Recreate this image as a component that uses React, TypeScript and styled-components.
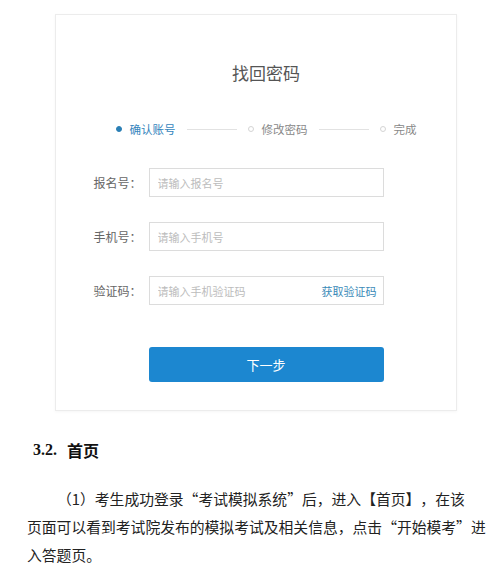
import React from 'react';
import styled, { createGlobalStyle } from 'styled-components';

const GlobalStyle = createGlobalStyle`
  html, body {
    margin: 0;
    padding: 0;
    background: #ffffff;
  }
  body {
    font-family: "Noto Sans CJK SC", "Noto Sans", sans-serif;
    color: #333;
  }
`;

const Page = styled.div`
  width: 499px;
  height: 570px;
  overflow: hidden;
  padding-top: 14px;
  box-sizing: border-box;
`;

const Card = styled.div`
  margin-left: 55px;
  width: 402px;
  box-sizing: border-box;
  border: 1px solid #ececec;
  box-shadow: 0 1px 3px rgba(0, 0, 0, 0.04);
  padding: 46px 0 28px 20px;
  display: flex;
  flex-direction: column;
  align-items: center;
`;

const Title = styled.h2`
  margin: 0;
  font-size: 17px;
  line-height: 24px;
  font-weight: 400;
  color: #555;
`;

const Steps = styled.div`
  margin-top: 36px;
  height: 16px;
  display: flex;
  align-items: center;
`;

const Step = styled.div<{ $active?: boolean }>`
  display: flex;
  align-items: center;
  gap: 8px;
  font-size: 11.5px;
  color: ${p => (p.$active ? '#3585bd' : '#888')};
`;

const Dot = styled.span<{ $active?: boolean }>`
  width: 6px;
  height: 6px;
  border-radius: 50%;
  box-sizing: border-box;
  background: ${p => (p.$active ? '#2a7fb5' : '#fff')};
  border: 1px solid ${p => (p.$active ? '#2a7fb5' : '#d4d4d4')};
`;

const Connector = styled.span`
  width: 50px;
  height: 1px;
  margin: 0 11px;
  background: #e2e2e2;
`;

const Form = styled.div`
  align-self: stretch;
  margin-top: 31px;
  display: grid;
  grid-template-columns: 1fr 235px 1fr;
  row-gap: 25px;
  align-items: center;
`;

const Label = styled.label`
  justify-self: end;
  padding-right: 7px;
  font-size: 12px;
  color: #666;
`;

const Field = styled.div`
  height: 29px;
  box-sizing: border-box;
  border: 1px solid #dcdcdc;
  display: flex;
  align-items: center;
  padding: 0 6px 0 8px;
`;

const Input = styled.input`
  flex: 1;
  min-width: 0;
  border: none;
  outline: none;
  padding: 0;
  background: transparent;
  font-family: inherit;
  font-size: 11px;
  color: #333;

  &::placeholder {
    color: #bcbcbc;
  }
`;

const CodeLink = styled.a`
  font-size: 11px;
  color: #3a8ab8;
  text-decoration: none;
`;

const Submit = styled.button`
  grid-column: 2;
  margin-top: 17px;
  height: 35px;
  border: none;
  border-radius: 3px;
  background: #1c87d0;
  color: #fff;
  font-family: inherit;
  font-size: 13px;
  cursor: pointer;
`;

const Heading = styled.h3`
  margin: 27px 0 0 33px;
  font-size: 16px;
  line-height: 24px;
  font-weight: 700;
  color: #111;
  display: flex;
  gap: 10px;
`;

const Num = styled.span`
  font-family: "Liberation Serif", serif;
`;

const Paragraph = styled.p`
  margin: 23px 0 0 27px;
  width: 465px;
  font-size: 14.8px;
  line-height: 28px;
  text-indent: 30px;
  color: #222;
  text-spacing-trim: space-all;
  white-space: nowrap;
`;

const fields = [
  { label: '报名号：', placeholder: '请输入报名号' },
  { label: '手机号：', placeholder: '请输入手机号' },
  { label: '验证码：', placeholder: '请输入手机验证码', code: true }
];

const steps = ['确认账号', '修改密码', '完成'];

export default function App() {
  return (
    <Page>
      <GlobalStyle />
      <Card>
        <Title>找回密码</Title>
        <Steps>
          {steps.map((s, i) => (
            <React.Fragment key={s}>
              {i > 0 && <Connector />}
              <Step $active={i === 0}>
                <Dot $active={i === 0} />
                {s}
              </Step>
            </React.Fragment>
          ))}
        </Steps>
        <Form>
          {fields.map(f => (
            <React.Fragment key={f.label}>
              <Label>{f.label}</Label>
              <Field>
                <Input placeholder={f.placeholder} />
                {f.code && <CodeLink href="#">获取验证码</CodeLink>}
              </Field>
              <span />
            </React.Fragment>
          ))}
          <Submit>下一步</Submit>
        </Form>
      </Card>
      <Heading>
        <Num>3.2.</Num>
        <span>首页</span>
      </Heading>
      <Paragraph>
        （1）考生成功登录“考试模拟系统”后，进入【首页】，在该
        <br />
        页面可以看到考试院发布的模拟考试及相关信息，点击“开始模考”进
        <br />
        入答题页。
      </Paragraph>
    </Page>
  );
}
